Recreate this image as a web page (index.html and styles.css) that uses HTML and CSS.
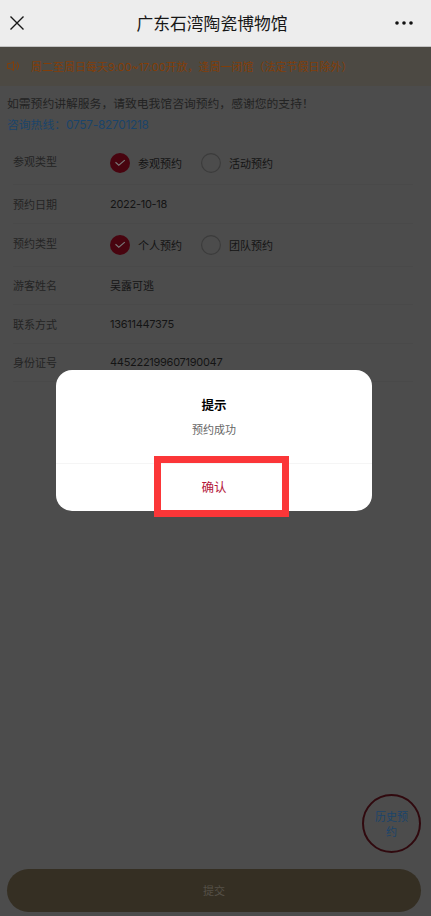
FILE: index.html
```html
<!DOCTYPE html>
<html lang="zh-CN">
<head>
<meta charset="utf-8">
<title>广东石湾陶瓷博物馆</title>
<link rel="stylesheet" href="styles.css">
</head>
<body>
<header class="nav">
  <svg class="close" width="16" height="16" viewBox="0 0 16 16"><path d="M1.5 1.5l13 13M14.5 1.5l-13 13"/></svg>
  <h1>广东石湾陶瓷博物馆</h1>
  <svg class="more" width="18" height="4" viewBox="0 0 18 4"><circle cx="2" cy="2" r="1.8"/><circle cx="9" cy="2" r="1.8"/><circle cx="16" cy="2" r="1.8"/></svg>
</header>
<main class="page">
  <div class="notice">
    <svg width="13" height="12" viewBox="0 0 13 12"><path d="M6.500 1.500v9L3.500 8.500H.6v-5h2.900zM8.300 4q1.300 2 0 4M10.300 2.300q2.700 3.700 0 7.400"/></svg>
    <span>周二至周日每天<b class="num hours">9:00~17:00</b>开放，逢周一闭馆（法定节假日除外）</span>
  </div>
  <div class="intro">
    <p>如需预约讲解服务，请致电我馆咨询预约，感谢您的支持！</p>
    <p class="hotline">咨询热线：<span class="num">0757-82701218</span></p>
  </div>
  <div class="form">
    <div class="row tall"><label>参观类型</label>
      <div class="choice"><svg class="radio on" viewBox="0 0 20 20"><circle cx="10" cy="10" r="10"/><path d="M5.500 9.300l3.300 2.800 6-5"/></svg>参观预约</div>
      <div class="choice"><svg class="radio" viewBox="0 0 20 20"><circle cx="10" cy="10" r="9.400"/></svg>活动预约</div>
    </div>
    <div class="row"><label>预约日期</label><span class="num date">2022-10-18</span></div>
    <div class="row tall"><label>预约类型</label>
      <div class="choice"><svg class="radio on" viewBox="0 0 20 20"><circle cx="10" cy="10" r="10"/><path d="M5.500 9.300l3.300 2.800 6-5"/></svg>个人预约</div>
      <div class="choice"><svg class="radio" viewBox="0 0 20 20"><circle cx="10" cy="10" r="9.400"/></svg>团队预约</div>
    </div>
    <div class="row"><label>游客姓名</label><span>吴露可逃</span></div>
    <div class="row"><label>联系方式</label><span class="num phone">13611447375</span></div>
    <div class="row"><label>身份证号</label><span class="num idno">445222199607190047</span></div>
  </div>
  <div class="bottom">
    <div class="history">历史预约</div>
    <div class="submit">提交</div>
  </div>
</main>
<section class="dialog">
  <div class="message"><h2>提示</h2><p>预约成功</p></div>
  <div class="confirm">确认</div>
  <div class="highlight"></div>
</section>
</body>
</html>
```
FILE: styles.css
```css
* { box-sizing: border-box; margin: 0; padding: 0; }
body {
  height: 916px;
  display: flex;
  flex-direction: column;
  overflow: hidden;
  background: #4c4c4c;
  color: #141414;
  font: 11px/16px "Noto Sans CJK SC", sans-serif;
}
svg { display: block; flex: none; fill: none; }
.num { font-family: Inter, "Noto Sans CJK SC", sans-serif; font-weight: 400; letter-spacing: -.28px; }
.nav {
  height: 47px;
  flex: none;
  display: flex;
  align-items: center;
  justify-content: space-between;
  padding: 0 18px 0 9px;
  background: #ededed;
  border-bottom: 1px solid #c4c4c4;
}
.nav h1 { font-size: 16.8px; line-height: 24px; font-weight: 400; color: #171717; margin-left: 4px; }
.close { stroke: #171717; stroke-width: 1.4; }
.more { fill: #111; }
.page { flex: 1; display: flex; flex-direction: column; }
.notice {
  height: 39px;
  display: flex;
  align-items: center;
  padding: 0 0 1px 7px;
  gap: 11px;
  background: #4c4943;
  color: #823e09;
  white-space: nowrap;
}
.notice svg { stroke: #823e09; stroke-width: 1; }
.notice .hours { letter-spacing: -.1px; }
.intro { height: 50px; padding: 6px 7px 0; font-size: 11.8px; line-height: 21px; color: #232323; white-space: nowrap; }
.hotline { color: #1b446a; }
.hotline .num { letter-spacing: -.22px; }
.form { padding: 6px 18px 0 13px; }
.row {
  height: 38.500px;
  display: flex;
  align-items: center;
  border-bottom: 1px solid #494949;
}
.row.tall { height: 43px; }
.row label { width: 97px; color: #242424; }
.row.tall label { padding-bottom: 4px; }
.choice { width: 91px; display: flex; align-items: center; gap: 8px; }
.radio { width: 20px; height: 20px; stroke: #3b3b3b; stroke-width: 1.1; }
.radio.on { fill: #48040f; stroke: none; }
.radio.on path { fill: none; stroke: #777; stroke-width: 1.2; }
.bottom { margin-top: auto; padding: 0 10px 4px 7px; }
.history {
  width: 59px;
  height: 59px;
  margin: 0 0 16px auto;
  padding: 13px 10px 0;
  border: 2px solid #30090e;
  border-radius: 50%;
  color: #1b446a;
  text-align: center;
  line-height: 15px;
}
.submit { height: 43px; border-radius: 22px; background: #352f23; color: #555148; text-align: center; line-height: 43px; }
.dialog {
  position: absolute;
  left: 56px;
  top: 370px;
  width: 316px;
  height: 141px;
  border-radius: 16px;
  background: #fff;
  text-align: center;
}
.message { height: 94px; padding-top: 25px; border-bottom: 1px solid #f5f5f5; }
.message h2 { font-size: 12.500px; line-height: 20px; font-weight: 700; color: #000; }
.message p { margin-top: 6px; color: #666; }
.confirm { height: 47px; line-height: 46px; font-size: 12.500px; color: #b4163a; }
.highlight { position: absolute; left: 98px; top: 86px; width: 135px; height: 61px; border: 7px solid #fb3638; }
```
